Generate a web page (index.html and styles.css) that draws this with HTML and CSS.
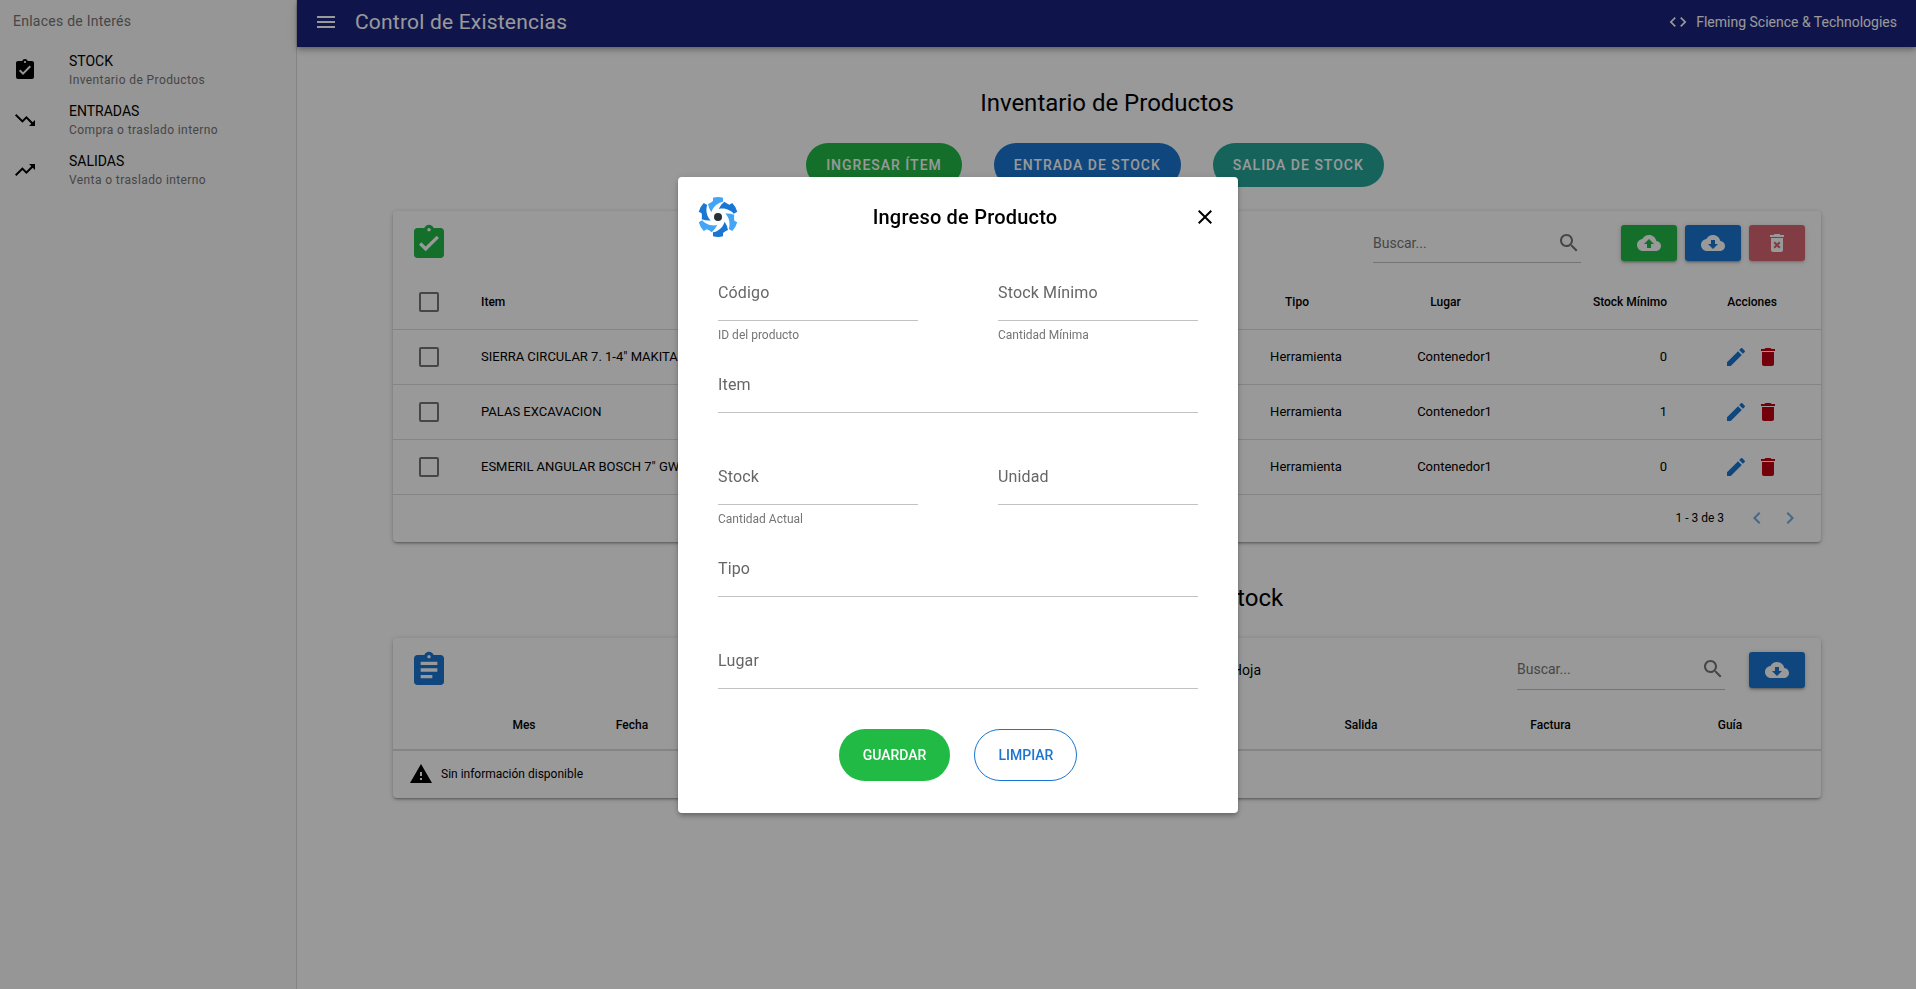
FILE: index.html
```html
<!DOCTYPE html>
<html lang="es">
<head>
<meta charset="utf-8">
<title>Control de Existencias</title>
<link rel="stylesheet" href="styles.css">
</head>
<body>
<svg class="sprite" aria-hidden="true">
  <symbol id="i-turned" viewBox="0 0 24 24"><path d="M19 3h-4.18C14.4 1.84 13.3 1 12 1c-1.3 0-2.4.84-2.82 2H5c-1.1 0-2 .9-2 2v14c0 1.1.9 2 2 2h14c1.1 0 2-.9 2-2V5c0-1.1-.9-2-2-2zm-7 0c.55 0 1 .45 1 1s-.45 1-1 1-1-.45-1-1 .45-1 1-1zm-2 14l-4-4 1.41-1.41L10 14.17l6.59-6.59L18 9l-8 8z"/></symbol>
  <symbol id="i-assignment" viewBox="0 0 24 24"><path d="M19 3h-4.18C14.4 1.84 13.3 1 12 1c-1.3 0-2.4.84-2.82 2H5c-1.1 0-2 .9-2 2v14c0 1.1.9 2 2 2h14c1.1 0 2-.9 2-2V5c0-1.1-.9-2-2-2zm-7 0c.55 0 1 .45 1 1s-.45 1-1 1-1-.45-1-1 .45-1 1-1zm2 14H7v-2h7v2zm3-4H7v-2h10v2zm0-4H7V7h10v2z"/></symbol>
  <symbol id="i-down" viewBox="0 0 24 24"><path d="M16 18l2.29-2.29-4.88-4.88-4 4L2 7.41 3.41 6l6 6 4-4 6.3 6.29L22 12v6z"/></symbol>
  <symbol id="i-up" viewBox="0 0 24 24"><path d="M16 6l2.29 2.29-4.88 4.88-4-4L2 16.59 3.41 18l6-6 4 4 6.3-6.29L22 12V6z"/></symbol>
  <symbol id="i-menu" viewBox="0 0 24 24"><path d="M3 18h18v-2H3v2zm0-5h18v-2H3v2zm0-7v2h18V6H3z"/></symbol>
  <symbol id="i-code" viewBox="0 0 24 24"><path d="M9.4 16.6L4.8 12l4.6-4.6L8 6l-6 6 6 6 1.400-1.400zm5.200 0l4.600-4.600-4.600-4.600L16 6l6 6-6 6-1.400-1.400z"/></symbol>
  <symbol id="i-search" viewBox="0 0 24 24"><path d="M15.500 14h-.79l-.28-.27C15.410 12.590 16 11.110 16 9.500 16 5.910 13.090 3 9.500 3S3 5.910 3 9.500 5.910 16 9.500 16c1.610 0 3.090-.59 4.230-1.570l.27.28v.79l5 4.990L20.490 19l-4.990-5zm-6 0C7.010 14 5 11.990 5 9.500S7.010 5 9.500 5 14 7.010 14 9.500 11.990 14 9.500 14z"/></symbol>
  <symbol id="i-cloud-up" viewBox="0 0 24 24"><path d="M19.350 10.040C18.670 6.590 15.640 4 12 4 9.110 4 6.600 5.640 5.350 8.040 2.340 8.360 0 10.910 0 14c0 3.310 2.690 6 6 6h13c2.760 0 5-2.240 5-5 0-2.640-2.050-4.780-4.650-4.960zM14 13v4h-4v-4H7l5-5 5 5h-3z"/></symbol>
  <symbol id="i-cloud-down" viewBox="0 0 24 24"><path d="M19.350 10.040C18.670 6.590 15.640 4 12 4 9.110 4 6.600 5.640 5.350 8.040 2.340 8.360 0 10.910 0 14c0 3.310 2.690 6 6 6h13c2.760 0 5-2.240 5-5 0-2.640-2.050-4.780-4.650-4.960zM17 13l-5 5-5-5h3V9h4v4h3z"/></symbol>
  <symbol id="i-delete-x" viewBox="0 0 24 24"><path d="M6 19c0 1.100.9 2 2 2h8c1.100 0 2-.9 2-2V7H6v12zm2.460-7.120l1.410-1.410L12 12.590l2.120-2.120 1.410 1.410L13.410 14l2.120 2.120-1.410 1.410L12 15.410l-2.120 2.120-1.410-1.410L10.590 14l-2.130-2.120zM15.500 4l-1-1h-5l-1 1H5v2h14V4z"/></symbol>
  <symbol id="i-delete" viewBox="0 0 24 24"><path d="M6 19c0 1.100.9 2 2 2h8c1.100 0 2-.9 2-2V7H6v12zM19 4h-3.500l-1-1h-5l-1 1H5v2h14V4z"/></symbol>
  <symbol id="i-edit" viewBox="0 0 24 24"><path d="M3 17.250V21h3.750L17.810 9.940l-3.750-3.750L3 17.250zM20.710 7.040c.39-.39.39-1.020 0-1.410l-2.340-2.340c-.39-.39-1.020-.39-1.410 0l-1.830 1.830 3.750 3.750 1.830-1.830z"/></symbol>
  <symbol id="i-left" viewBox="0 0 24 24"><path d="M15.410 7.410L14 6l-6 6 6 6 1.410-1.410L10.830 12z"/></symbol>
  <symbol id="i-right" viewBox="0 0 24 24"><path d="M10 6L8.590 7.410 13.170 12l-4.580 4.590L10 18l6-6z"/></symbol>
  <symbol id="i-warning" viewBox="0 0 24 24"><path d="M1 21h22L12 2 1 21zm12-3h-2v-2h2v2zm0-4h-2v-4h2v4z"/></symbol>
  <symbol id="i-close" viewBox="0 0 24 24"><path d="M19 6.410L17.590 5 12 10.590 6.410 5 5 6.410 10.590 12 5 17.590 6.410 19 12 13.410 17.590 19 19 17.590 13.410 12z"/></symbol>
</svg>

<div class="layout">
  <aside class="sidebar">
    <h2 class="sidebar-title">Enlaces de Interés</h2>
    <nav>
      <a class="link" href="#"><svg class="icon"><use href="#i-turned"/></svg><span><span class="link-name">STOCK</span><span class="link-note">Inventario de Productos</span></span></a>
      <a class="link" href="#"><svg class="icon"><use href="#i-down"/></svg><span><span class="link-name">ENTRADAS</span><span class="link-note">Compra o traslado interno</span></span></a>
      <a class="link" href="#"><svg class="icon"><use href="#i-up"/></svg><span><span class="link-name">SALIDAS</span><span class="link-note">Venta o traslado interno</span></span></a>
    </nav>
  </aside>

  <div class="page">
    <header class="topbar">
      <button class="plain" aria-label="Menú"><svg class="icon"><use href="#i-menu"/></svg></button>
      <h1 class="brand">Control de Existencias</h1>
      <a class="company" href="#"><svg class="icon icon-s"><use href="#i-code"/></svg>Fleming Science &amp; Technologies</a>
    </header>

    <main class="content">
      <h2 class="heading">Inventario de Productos</h2>
      <div class="actions">
        <button class="pill green">INGRESAR ÍTEM</button>
        <button class="pill blue">ENTRADA DE STOCK</button>
        <button class="pill teal">SALIDA DE STOCK</button>
      </div>

      <section class="card">
        <div class="tools">
          <svg class="icon-l fg-green"><use href="#i-turned"/></svg>
          <label class="search"><input type="text" placeholder="Buscar..." aria-label="Buscar"><svg class="icon"><use href="#i-search"/></svg></label>
          <div class="tool-buttons">
            <button class="tool green" aria-label="Subir"><svg class="icon"><use href="#i-cloud-up"/></svg></button>
            <button class="tool blue" aria-label="Descargar"><svg class="icon"><use href="#i-cloud-down"/></svg></button>
            <button class="tool red" aria-label="Borrar selección" disabled><svg class="icon"><use href="#i-delete-x"/></svg></button>
          </div>
        </div>
        <table class="grid stock">
          <colgroup><col class="c-check"><col><col class="c-type"><col class="c-place"><col class="c-min"><col class="c-act"></colgroup>
          <thead>
            <tr><th><input class="check" type="checkbox" aria-label="Seleccionar todo"></th><th class="left">Item</th><th><span class="sort">Tipo</span></th><th><span class="sort">Lugar</span></th><th class="right">Stock Mínimo</th><th>Acciones</th></tr>
          </thead>
          <tbody>
            <tr><td><input class="check" type="checkbox" aria-label="Seleccionar"></td><td class="left">SIERRA CIRCULAR 7. 1-4" MAKITA</td><td>Herramienta</td><td>Contenedor1</td><td class="right">0</td><td><span class="row-actions"><button class="plain fg-blue" aria-label="Editar"><svg class="icon"><use href="#i-edit"/></svg></button><button class="plain fg-red" aria-label="Eliminar"><svg class="icon"><use href="#i-delete"/></svg></button></span></td></tr>
            <tr><td><input class="check" type="checkbox" aria-label="Seleccionar"></td><td class="left">PALAS EXCAVACION</td><td>Herramienta</td><td>Contenedor1</td><td class="right">1</td><td><span class="row-actions"><button class="plain fg-blue" aria-label="Editar"><svg class="icon"><use href="#i-edit"/></svg></button><button class="plain fg-red" aria-label="Eliminar"><svg class="icon"><use href="#i-delete"/></svg></button></span></td></tr>
            <tr><td><input class="check" type="checkbox" aria-label="Seleccionar"></td><td class="left">ESMERIL ANGULAR BOSCH 7" GWS</td><td>Herramienta</td><td>Contenedor1</td><td class="right">0</td><td><span class="row-actions"><button class="plain fg-blue" aria-label="Editar"><svg class="icon"><use href="#i-edit"/></svg></button><button class="plain fg-red" aria-label="Eliminar"><svg class="icon"><use href="#i-delete"/></svg></button></span></td></tr>
          </tbody>
        </table>
        <div class="pager">
          <span>1 - 3 de 3</span>
          <button class="plain" aria-label="Anterior" disabled><svg class="icon"><use href="#i-left"/></svg></button>
          <button class="plain" aria-label="Siguiente" disabled><svg class="icon"><use href="#i-right"/></svg></button>
        </div>
      </section>

      <h2 class="heading">Historial de Movimiento de Stock</h2>

      <section class="card">
        <div class="tools">
          <svg class="icon-l fg-blue"><use href="#i-assignment"/></svg>
          <span class="sheet">Hoja</span>
          <label class="search"><input type="text" placeholder="Buscar..." aria-label="Buscar"><svg class="icon"><use href="#i-search"/></svg></label>
          <div class="tool-buttons">
            <button class="tool blue" aria-label="Descargar"><svg class="icon"><use href="#i-cloud-down"/></svg></button>
          </div>
        </div>
        <table class="grid moves">
          <colgroup><col class="c-lead"><col class="c-date"><col class="c-date"><col><col class="c-out"><col class="c-bill"><col class="c-guide"></colgroup>
          <thead>
            <tr><th></th><th><span class="sort">Mes</span></th><th><span class="sort">Fecha</span></th><th></th><th><span class="sort">Salida</span></th><th><span class="sort">Factura</span></th><th><span class="sort">Guía</span></th></tr>
          </thead>
        </table>
        <div class="empty"><svg class="icon"><use href="#i-warning"/></svg>Sin información disponible</div>
      </section>
    </main>
  </div>
</div>

<div class="scrim">
  <form class="dialog" role="dialog" aria-labelledby="dialog-title">
    <div class="dialog-head">
      <svg class="logo" viewBox="-60 -60 120 120" aria-hidden="true">
        <g class="light"><path id="b" d="M-15 -58Q0 -62 15 -58L15 -46C3 -44-14 -34-20 -14Q-28 -26-30 -39Q-22 -42-15 -48Z"/><use href="#b" transform="rotate(120)"/><use href="#b" transform="rotate(240)"/></g>
        <g class="dark"><use href="#b" transform="rotate(60)"/><use href="#b" transform="rotate(180)"/><use href="#b" transform="rotate(300)"/></g>
        <circle r="12"/>
      </svg>
      <h2 class="dialog-title" id="dialog-title">Ingreso de Producto</h2>
      <button class="plain close" type="button" aria-label="Cerrar"><svg class="icon"><use href="#i-close"/></svg></button>
    </div>
    <div class="fields">
      <div class="field"><input id="f-code" type="text"><label for="f-code">Código</label><small>ID del producto</small></div>
      <div class="field"><input id="f-min" type="text"><label for="f-min">Stock Mínimo</label><small>Cantidad Mínima</small></div>
      <div class="field wide"><input id="f-item" type="text"><label for="f-item">Item</label></div>
      <div class="field"><input id="f-stock" type="text"><label for="f-stock">Stock</label><small>Cantidad Actual</small></div>
      <div class="field"><input id="f-unit" type="text"><label for="f-unit">Unidad</label></div>
      <div class="field wide"><input id="f-type" type="text"><label for="f-type">Tipo</label></div>
      <div class="field wide"><input id="f-place" type="text"><label for="f-place">Lugar</label></div>
    </div>
    <div class="dialog-actions">
      <button class="round green" type="submit">GUARDAR</button>
      <button class="round outline" type="reset">LIMPIAR</button>
    </div>
  </form>
</div>
</body>
</html>
```
FILE: styles.css
```css
* { box-sizing: border-box; }

body {
  margin: 0;
  font: 14px/20px Roboto, "Liberation Sans", sans-serif;
  color: #000;
  background: #fff;
}

h1, h2 { margin: 0; font-weight: 400; }
a { color: inherit; text-decoration: none; }
button, input { font: inherit; color: inherit; }
button { cursor: pointer; }

.sprite { position: absolute; width: 0; height: 0; }
svg { display: block; flex: none; fill: currentColor; }
.icon { width: 24px; height: 24px; }
.icon-s { width: 20px; height: 20px; }
.icon-l { width: 40px; height: 40px; }
.plain { display: block; padding: 0; border: 0; background: none; }

.green { background: #21ba45; }
.blue { background: #1976d2; }
.teal { background: #26a69a; }
.red { background: #c10015; }
.fg-green { color: #21ba45; }
.fg-blue { color: #1976d2; }
.fg-red { color: #c10015; }

.layout { display: flex; min-height: 100vh; }

.sidebar {
  flex: none;
  width: 297px;
  background: #fafafa;
  border-right: 1px solid #dcdcdc;
}
.sidebar-title {
  padding: 11px 13px 14px;
  font-size: 14px;
  line-height: 20px;
  letter-spacing: 0.25px;
  color: #757575;
}
.link {
  display: flex;
  align-items: center;
  gap: 32px;
  height: 50px;
  padding: 0 13px;
}
.link-name, .link-note { display: block; line-height: 19px; }
.link-name { padding-top: 2px; }
.link-note { font-size: 12px; letter-spacing: 0.4px; color: #757575; }

.page { flex: 1; min-width: 0; }
.topbar {
  display: flex;
  align-items: center;
  height: 47px;
  padding: 0 19px 3px 17px;
  color: #fff;
  background: #1a237e;
  box-shadow: 0 2px 4px -1px #0003, 0 4px 5px #00000024, 0 1px 10px #0000001f;
}
.brand {
  flex: 1;
  padding-left: 17px;
  font-size: 21px;
  letter-spacing: 0.2px;
}
.company { display: flex; align-items: center; gap: 8px; }

.content { padding: 40px 95px 0 96px; }
.heading {
  padding-bottom: 24px;
  font-size: 24px;
  line-height: 32px;
  text-align: center;
}
.actions {
  display: flex;
  justify-content: center;
  gap: 32px;
  padding: 0 24px 24px 0;
}
.pill {
  height: 44px;
  padding: 0 20px;
  border: 0;
  border-radius: 22px;
  color: #fff;
  font-weight: 500;
  letter-spacing: 1px;
}

.card {
  margin-bottom: 40px;
  border-radius: 4px;
  box-shadow: 0 1px 5px #0003, 0 2px 2px #00000024, 0 3px 1px -2px #0000001f;
}
.tools {
  display: flex;
  align-items: center;
  height: 64px;
  padding: 0 16px;
}
.search {
  display: flex;
  align-items: center;
  width: 208px;
  height: 40px;
  margin-left: auto;
  margin-right: 40px;
  border-bottom: 1px solid #c2c2c2;
  color: #757575;
}
.search input {
  flex: 1;
  min-width: 0;
  padding: 0;
  border: 0;
  outline: 0;
  background: none;
}
.search input::placeholder { color: #757575; opacity: 1; }
.tool-buttons { display: flex; gap: 8px; }
.tool {
  display: flex;
  align-items: center;
  justify-content: center;
  width: 56px;
  height: 36px;
  padding: 0;
  border: 0;
  border-radius: 3px;
  color: #fff;
  box-shadow: 0 1px 5px #0003, 0 2px 2px #00000024, 0 3px 1px -2px #0000001f;
}
.tool:disabled { opacity: 0.6; }
.sheet { margin-left: auto; }
.sheet + .search { margin-left: 256px; margin-right: 24px; }

.grid {
  width: 100%;
  table-layout: fixed;
  border-collapse: collapse;
  font-size: 13px;
}
.grid th, .grid td {
  height: 55px;
  padding: 0 16px;
  text-align: center;
  border-bottom: 1px solid #dcdcdc;
}
.grid th { height: 54px; font-size: 12px; font-weight: 500; }
.grid .left { text-align: left; }
.grid .right { text-align: right; }
.sort { padding-right: 18px; }
.c-check { width: 72px; }
.c-type { width: 146px; }
.c-place { width: 151px; }
.c-min { width: 153px; }
.c-act { width: 138px; }
.moves th { height: 48px; border-bottom-width: 2px; }
.c-lead { width: 86px; }
.c-date { width: 108px; }
.c-out { width: 184px; }
.c-bill { width: 195px; }
.c-guide { width: 164px; }

.check {
  appearance: none;
  display: block;
  width: 20px;
  height: 20px;
  margin: 0 auto;
  border: 2px solid #757575;
  border-radius: 2px;
}
.row-actions { display: flex; justify-content: center; gap: 8px; }
.pager {
  display: flex;
  align-items: center;
  justify-content: flex-end;
  gap: 9px;
  height: 47px;
  padding: 0 19px;
  font-size: 12px;
}
.pager span { margin-right: 12px; }
.pager .plain { color: #1976d2; opacity: 0.6; }
.empty {
  display: flex;
  align-items: center;
  gap: 8px;
  height: 47px;
  padding: 0 16px;
  font-size: 12px;
}

.scrim {
  position: fixed;
  inset: 0;
  display: flex;
  align-items: center;
  justify-content: center;
  background: #0006;
}
.dialog {
  width: 560px;
  background: #fff;
  border-radius: 4px;
  box-shadow: 0 2px 4px -1px #0003, 0 4px 5px #00000024, 0 1px 10px #0000001f;
}
.dialog-head {
  display: grid;
  grid-template-columns: 40px 1fr 26px;
  align-items: center;
  padding: 20px 20px 28px;
}
.logo { width: 40px; height: 40px; }
.logo .light { fill: #42a5f5; }
.logo .dark { fill: #1976d2; }
.logo circle { fill: #263238; }
.dialog-title {
  font-size: 20px;
  line-height: 32px;
  font-weight: 500;
  letter-spacing: 0.2px;
  text-align: center;
}
.close { justify-self: center; }

.fields {
  display: grid;
  grid-template-columns: 1fr 1fr;
  column-gap: 80px;
  padding: 0 40px;
}
.field {
  display: grid;
  grid-template-rows: 56px 36px;
}
.wide { grid-column: 1 / -1; }
.field input, .field label { grid-area: 1 / 1; font-size: 16px; letter-spacing: 0.15px; }
.field label { align-self: center; color: #666; pointer-events: none; }
.field input {
  width: 100%;
  padding: 20px 0 0;
  border: 0;
  border-bottom: 1px solid #c2c2c2;
  outline: 0;
  background: none;
}
.field small { padding-top: 4px; font-size: 12px; color: #757575; }

.dialog-actions {
  display: flex;
  justify-content: center;
  gap: 24px;
  padding: 4px 0 32px;
}
.round {
  height: 52px;
  padding: 0 24px;
  border: 0;
  border-radius: 26px;
  font-weight: 500;
  color: #fff;
}
.outline { padding: 0 23px; background: none; color: #1976d2; border: 1px solid #1976d2; }
```
